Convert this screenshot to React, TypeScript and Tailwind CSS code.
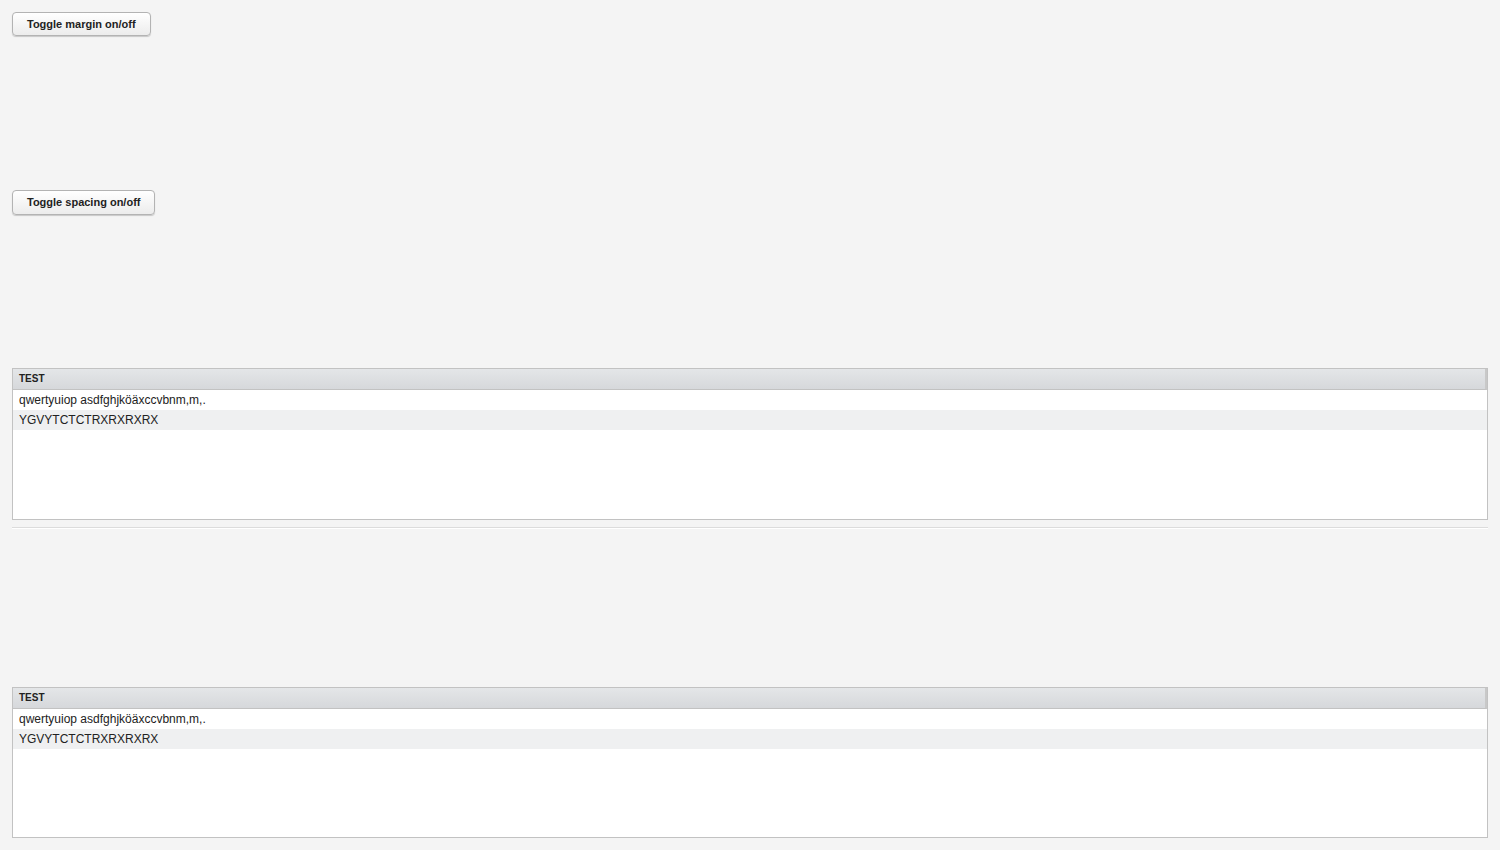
import React from 'react';

const rows = ['qwertyuiop asdfghjköäxccvbnm,m,.', 'YGVYTCTCTRXRXRXRX'];

const ToggleButton = ({ label }: { label: string }) => (
  <button
    type="button"
    className="self-start h-[25px] px-[14px] rounded-[4px] border border-[#b3b3b3] bg-gradient-to-b from-[#ffffff] to-[#ececec] shadow-[0_1px_1px_rgba(0,0,0,0.18)] text-[11px] font-bold text-[#222] leading-none"
  >
    {label}
  </button>
);

const TestTable = ({ height }: { height: string }) => (
  <div className={`flex flex-col border border-[#c2c2c2] bg-white ${height}`}>
    <div className="h-[21px] flex items-center pb-[2px] px-[6px] border-b border-[#c2c2c2] border-r-2 border-r-[#c8c8c8] bg-gradient-to-b from-[#e4e6e8] to-[#d6d8db] text-[10px] font-bold text-[#222]">
      TEST
    </div>
    {rows.map((r, i) => (
      <div
        key={i}
        className={`h-[20px] flex items-center px-[6px] text-[12px] text-[#222] ${i % 2 === 1 ? 'bg-[#eff0f1]' : 'bg-white'}`}
      >
        {r}
      </div>
    ))}
  </div>
);

export default function App() {
  return (
    <div
      className="h-[850px] bg-[#f4f4f4] p-3 flex flex-col"
      style={{ fontFamily: '"Liberation Sans", Arial, sans-serif' }}
    >
      <ToggleButton label="Toggle margin on/off" />
      <div className="mt-[153px]">
        <ToggleButton label="Toggle spacing on/off" />
      </div>
      <div className="mt-[153px]">
        <TestTable height="h-[152px]" />
      </div>
      <div className="mt-[7px] border-t border-[#dcdcdc] border-b border-b-white" />
      <div className="mt-[158px]">
        <TestTable height="h-[151px]" />
      </div>
    </div>
  );
}
